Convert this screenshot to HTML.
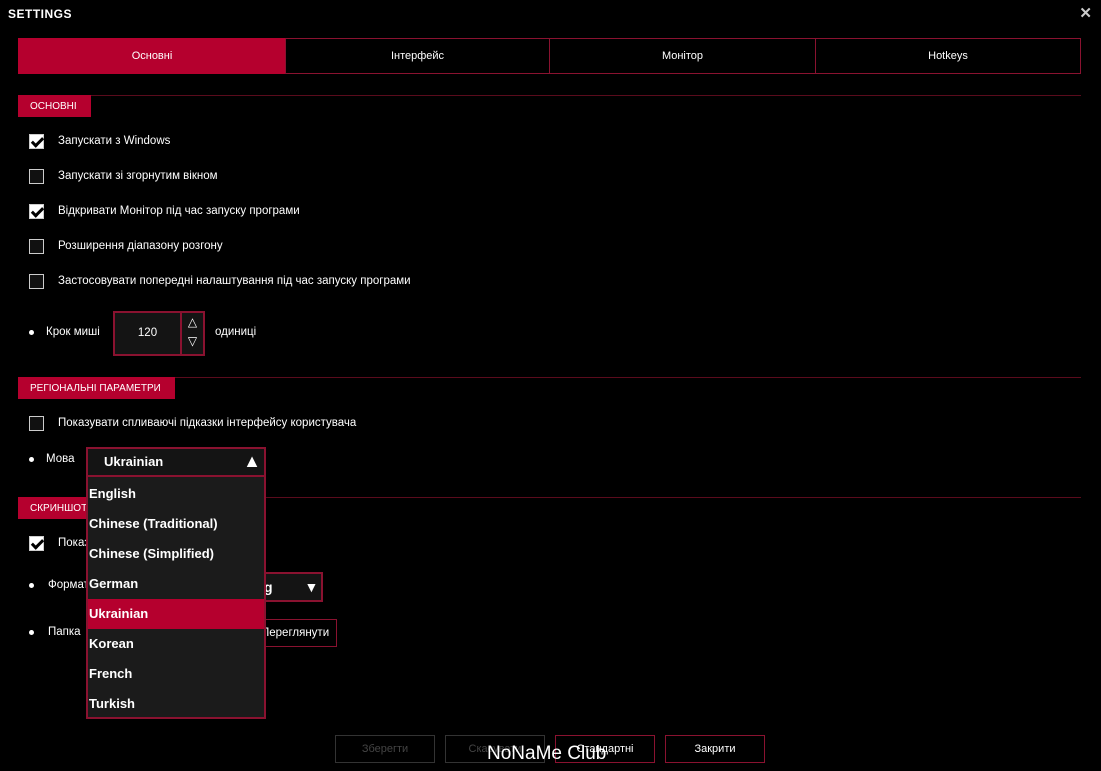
<!DOCTYPE html><html><head><meta charset="utf-8"><style>
*{box-sizing:border-box;margin:0;padding:0}
body{width:1101px;height:771px;background:#000;color:#fff;font-family:"Liberation Sans",sans-serif;font-size:11.5px;position:relative;overflow:hidden}
.a{position:absolute}
.tab{position:absolute;top:38px;height:36px;border:1px solid #8a1230;display:flex;align-items:center;justify-content:center;font-size:11px}
.hdr{position:absolute;height:22px;background:#b5002e;font-size:10px;display:flex;align-items:center;padding-left:12px}
.line{position:absolute;height:1px;background:#5a0b1c;right:20px}
.cb{position:absolute;left:29px;width:15px;height:15px;border:1px solid #ccc;background:#111}
.cb.on{background:#fff}
.cb.on:after{content:"";position:absolute;left:4px;top:0px;width:4px;height:9px;border:solid #000;border-width:0 3px 3px 0;transform:rotate(45deg)}
.lbl{position:absolute;left:58px}
.dot{position:absolute;left:29px;width:5px;height:5px;border-radius:50%;background:#fff}
.btn{position:absolute;top:735px;width:100px;height:28px;border:1px solid #333;display:flex;align-items:center;justify-content:center;font-size:11px;color:#444}
.item{height:30px;line-height:30px;font-size:13px;font-weight:bold;padding-left:1px}
</style></head><body>
<div class="a" style="left:8px;top:7px;font-weight:bold;font-size:12px;letter-spacing:0.5px">SETTINGS</div>
<div class="a" style="right:9px;top:4px;font-size:15px;color:#ccc;font-weight:bold">✕</div>
<div class="tab" style="left:18px;width:268px;background:#b5002e;border-color:#b5002e">Основні</div>
<div class="tab" style="left:285px;width:265px">Інтерфейс</div>
<div class="tab" style="left:549px;width:267px">Монітор</div>
<div class="tab" style="left:815px;width:266px">Hotkeys</div>

<div class="line" style="left:18px;top:95px"></div>
<div class="hdr" style="left:18px;top:95px;width:73px">ОСНОВНІ</div>
<div class="cb on" style="top:134px"></div><div class="lbl" style="top:135px">Запускати з Windows</div>
<div class="cb" style="top:169px"></div><div class="lbl" style="top:170px">Запускати зі згорнутим вікном</div>
<div class="cb on" style="top:204px"></div><div class="lbl" style="top:205px">Відкривати Монітор під час запуску програми</div>
<div class="cb" style="top:239px"></div><div class="lbl" style="top:240px">Розширення діапазону розгону</div>
<div class="cb" style="top:274px"></div><div class="lbl" style="top:275px">Застосовувати попередні налаштування під час запуску програми</div>
<div class="dot" style="top:330px"></div><div class="a" style="left:46px;top:326px">Крок миші</div>
<div class="a" style="left:113px;top:311px;width:69px;height:45px;border:2px solid #8a1230;background:#141414;text-align:center;line-height:40px">120</div>
<div class="a" style="left:180px;top:311px;width:25px;height:45px;border:2px solid #8a1230;background:#141414;text-align:center;font-size:12px;line-height:19px">△<br>▽</div>
<div class="a" style="left:215px;top:326px">одиниці</div>

<div class="line" style="left:18px;top:377px"></div>
<div class="hdr" style="left:18px;top:377px;width:157px">РЕГІОНАЛЬНІ ПАРАМЕТРИ</div>
<div class="cb" style="top:416px"></div><div class="lbl" style="top:417px">Показувати спливаючі підказки інтерфейсу користувача</div>
<div class="dot" style="top:457px"></div><div class="a" style="left:46px;top:453px">Мова</div>

<div class="line" style="left:18px;top:497px"></div>
<div class="hdr" style="left:18px;top:497px;width:90px">СКРИНШОТ</div>
<div class="cb on" style="top:536px"></div><div class="lbl" style="top:537px">Показувати ... ах</div>
<div class="dot" style="top:583px"></div><div class="a" style="left:48px;top:579px">Формат</div>
<div class="a" style="left:200px;top:572px;width:123px;height:30px;border:2px solid #8a1230;background:#141414;font-size:14px;font-weight:bold;padding:5px 0 0 62px">g <span style="margin-left:28px">▼</span></div>
<div class="dot" style="top:630px"></div><div class="a" style="left:48px;top:626px">Папка</div>
<div class="a" style="left:230px;top:619px;width:107px;height:28px;border:1px solid #8a1230;padding:7px 0 0 30px">Переглянути</div>

<div class="a" style="left:86px;top:447px;width:180px;height:30px;border:2px solid #8a1230;background:#141414;font-size:13px;font-weight:bold;padding:5px 0 0 16px">Ukrainian<span class="a" style="right:3px;top:2px;font-size:18px">▲</span></div>
<div class="a" style="left:86px;top:476px;width:180px;height:243px;border:2px solid #8a1230;border-top:1px solid #8a1230;background:#1b1b1b;padding-top:2px">
<div class="item">English</div><div class="item">Chinese (Traditional)</div><div class="item">Chinese (Simplified)</div><div class="item">German</div><div class="item" style="background:#b5002e">Ukrainian</div><div class="item">Korean</div><div class="item">French</div><div class="item">Turkish</div></div>

<div class="btn" style="left:335px">Зберегти</div>
<div class="btn" style="left:445px">Скасувати</div>
<div class="btn" style="left:555px;border-color:#8a1230;color:#fff">Стандартні</div>
<div class="btn" style="left:665px;border-color:#8a1230;color:#fff">Закрити</div>
<div class="a" style="left:487px;top:743px;font-size:19px;color:#fff">NoNaMe Club</div>
</body></html>
